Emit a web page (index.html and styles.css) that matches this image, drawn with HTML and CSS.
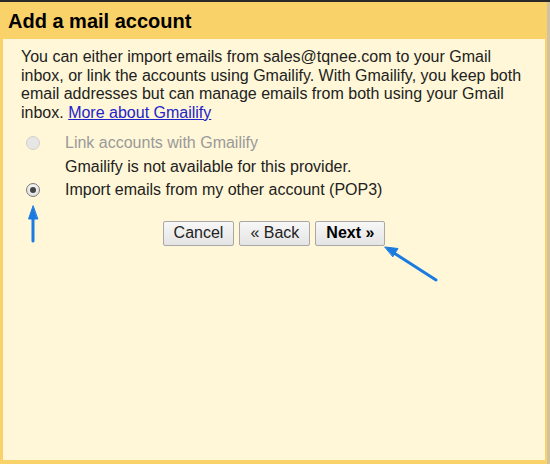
FILE: index.html
```html
<!DOCTYPE html>
<html lang="en">
  <head>
    <meta charset="UTF-8" />
    <title>Add a mail account</title>
    <link rel="stylesheet" href="styles.css">
  </head>
  <body>
    <div class="top-bar"></div>
    <div class="dialog">
      <h1 class="dialog-title">Add a mail account</h1>
      <div class="dialog-body">
        <p class="intro">
          You can either import emails from sales@tqnee.com to your Gmail
          inbox, or link the accounts using Gmailify. With Gmailify, you keep
          both email addresses but can manage emails from both using your Gmail
          inbox. <a href="#">More about Gmailify</a>
        </p>

        <div class="options">
          <label class="option disabled">
            <input type="radio" name="mode" disabled />
            <span>Link accounts with Gmailify</span>
          </label>
          <div class="option-note">Gmailify is not available for this provider.</div>
          <label class="option">
            <input type="radio" name="mode" checked />
            <span>Import emails from my other account (POP3)</span>
          </label>
        </div>

        <div class="actions">
          <button>Cancel</button>
          <button>&laquo; Back</button>
          <button class="primary">Next &raquo;</button>
        </div>
      </div>
    </div>

    <!-- annotation arrows -->
    <svg class="marks" width="550" height="464" viewBox="0 0 550 464">
      <g stroke="#1a7be0" stroke-width="3" stroke-linecap="round" fill="#1a7be0">
        <line x1="33" y1="241" x2="33" y2="216" />
        <polygon points="33,206 28.5,219 37.5,219" stroke-width="1" />
        <line x1="436" y1="280" x2="394" y2="253" />
        <polygon points="385,247 398,248.5 393,256.5" stroke-width="1" />
      </g>
    </svg>
  </body>
</html>
```

FILE: styles.css
```css
/* Layout */
html,
body {
  margin: 0;
  padding: 0;
  height: 100%;
}
body {
  display: flex;
  flex-direction: column;
  background: #f9d26a;
  font-family: Arial, "Liberation Sans", sans-serif;
  font-size: 16px;
  color: #222;
  overflow: hidden;
}
.top-bar {
  height: 2px;
  background: #2a2a2a;
}
/* Dialog */
.dialog {
  flex: 1;
  display: flex;
  flex-direction: column;
  padding: 0 2px 4px 3px;
  border-right: 3px solid #cfc3a2;
}
.dialog-title {
  margin: 0;
  padding: 8px 0 0 5px;
  height: 29px;
  font-size: 20px;
  font-weight: bold;
  color: #000;
}
.dialog-body {
  flex: 1;
  background: #fff7d7;
  padding: 9px 15px 0 18px;
}
.intro {
  margin: 0;
  line-height: 18.5px;
}
.intro a {
  color: #2323cc;
}
/* Options */
.options {
  margin-top: 9px;
  line-height: 23.5px;
}
.option {
  display: flex;
  align-items: center;
}
.option input {
  appearance: none;
  -webkit-appearance: none;
  box-sizing: border-box;
  margin: 0 25px 0 5px;
  width: 14px;
  height: 14px;
  border-radius: 50%;
  border: 1px solid #7d7d7d;
  background: radial-gradient(circle at 50% 35%, #fafafa, #d8d8d8);
  position: relative;
}
.option input:checked::after {
  content: "";
  position: absolute;
  left: 3px;
  top: 3px;
  width: 6px;
  height: 6px;
  border-radius: 50%;
  background: #444;
}
.option.disabled input {
  border-color: #d0d0d0;
  background: #e6e6e4;
}
.option.disabled span {
  color: #9a9a9a;
}
.option-note {
  padding-left: 44px;
}
/* Buttons */
.actions {
  display: flex;
  justify-content: center;
  gap: 5px;
  margin: 19px 3px 0 0;
}
.actions button {
  height: 25px;
  padding: 0 10px;
  font-family: inherit;
  font-size: 16px;
  color: #222;
  background: linear-gradient(#f7f7f7, #e4e4e4);
  border: 1px solid #a8a8a8;
  border-radius: 2px;
}
.actions button.primary {
  font-weight: bold;
  color: #000;
}
/* Annotation overlay */
.marks {
  position: absolute;
  top: 0;
  left: 0;
  pointer-events: none;
}
```
